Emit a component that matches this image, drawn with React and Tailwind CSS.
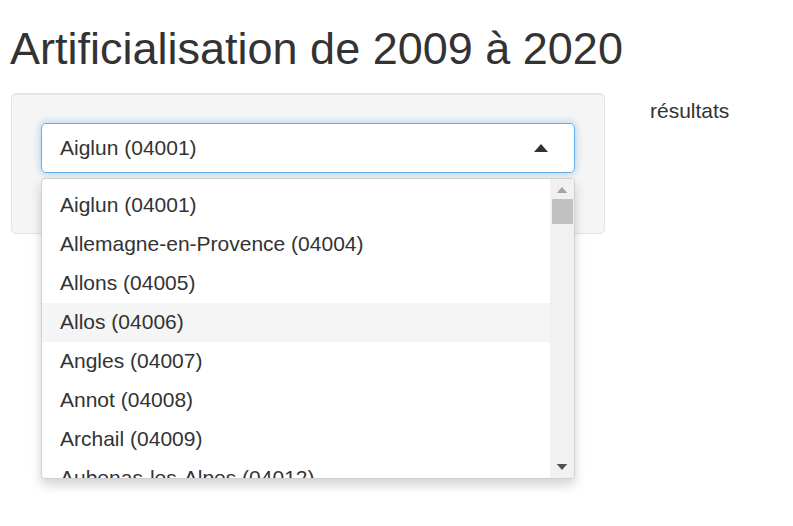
import React from 'react';

const communes = [
  'Aiglun (04001)',
  'Allemagne-en-Provence (04004)',
  'Allons (04005)',
  'Allos (04006)',
  'Angles (04007)',
  'Annot (04008)',
  'Archail (04009)',
  'Aubenas-les-Alpes (04012)',
];

const Caret = ({ up, className }) => (
  <svg width="14" height="8" viewBox="0 0 14 8" className={className}>
    {up ? <path d="M0 8 L7 0 L14 8 Z" fill="currentColor" /> : <path d="M0 0 L14 0 L7 8 Z" fill="currentColor" />}
  </svg>
);

export default function App() {
  return (
    <div className="min-h-[526px] bg-white text-[#333] font-['Liberation_Sans',Arial,sans-serif]">
      <h1 className="pt-6 pl-[10px] text-[45px] leading-[1.1] font-normal">Artificialisation de 2009 à 2020</h1>

      <div className="flex mt-[19px] pl-[11px]">
        {/* panneau de sélection */}
        <div className="relative w-[594px] h-[141px] px-[29px] pt-[29px] bg-[#f5f5f5] border border-[#e3e3e3] rounded-[5px] shadow-[inset_0_1px_1px_rgba(0,0,0,0.05)]">
          <div className="relative">
            <div className="flex items-center justify-between h-[50px] pl-[18px] pr-[26px] bg-white border border-[#66afe9] rounded-[5px] shadow-[0_0_8px_rgba(102,175,233,0.6)] text-[21px]">
              <span>Aiglun (04001)</span>
              <Caret up className="text-[#333]" />
            </div>

            {/* liste déroulante */}
            <div className="absolute left-0 top-[55px] w-[534px] h-[301px] bg-white border border-[#d0d0d0] rounded-[4px] shadow-[0_6px_12px_rgba(0,0,0,0.175)] flex overflow-hidden z-10">
              <div className="flex-1 pt-[7px] overflow-hidden">
                {communes.map((c, i) => (
                  <div
                    key={c}
                    className={`h-[39px] flex items-center pl-[18px] text-[21px] whitespace-nowrap ${i === 3 ? 'bg-[#f5f5f5]' : ''}`}
                  >
                    {c}
                  </div>
                ))}
              </div>
              <div className="w-[24px] bg-[#f1f1f1] flex flex-col items-center">
                <Caret up className="mt-[8px] w-[12px] h-[6px] text-[#a3a3a3]" />
                <div className="mt-[6px] w-[21px] h-[25px] bg-[#c1c1c1]" />
                <div className="flex-1" />
                <Caret className="mb-[8px] w-[12px] h-[6px] text-[#505050]" />
              </div>
            </div>
          </div>
        </div>

        <div className="pl-[45px] pt-[2px] text-[21px]">résultats</div>
      </div>
    </div>
  );
}
